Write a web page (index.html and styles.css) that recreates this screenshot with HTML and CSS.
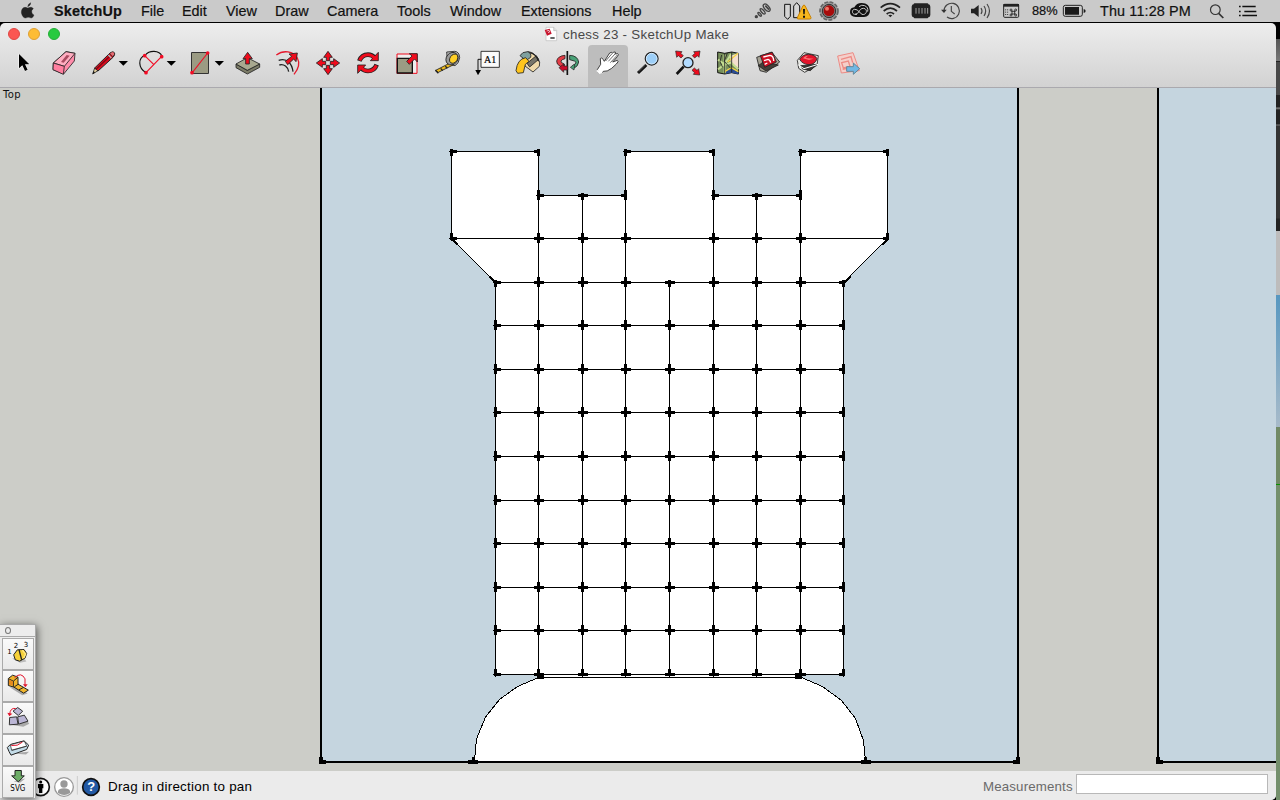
FILE: index.html
```html
<!DOCTYPE html>
<html lang="en">
<head>
<meta charset="utf-8">
<title>chess 23 - SketchUp Make</title>
<link rel="stylesheet" href="styles.css">
</head>
<body>
<header class="menubar">
  <svg class="apple" viewBox="57 0 54 66"><path d="M83 20q1-9 9-12q1 8-9 12M83 24c4 0 7-3 11-2q4 1 6 4q-6 4-5 10q1 7 7 9q-3 9-8 9c-4 0-6-2-9-2s-5 2-9 2c-6 0-12-10-12-18c0-9 6-14 11-14c4 0 6 2 8 2z" fill="#222" stroke="#222"/></svg>
  <nav class="menus">
    <b class="m1">SketchUp</b><span class="m2">File</span><span class="m3">Edit</span><span class="m4">View</span><span class="m5">Draw</span><span class="m6">Camera</span><span class="m7">Tools</span><span class="m8">Window</span><span class="m9">Extensions</span><span class="m10">Help</span>
  </nav>
  <div class="tray">
    <svg width="28" height="22" viewBox="36 0 84 66" fill="none" stroke="#444" stroke-width="4"><circle cx="49" cy="50" r="3" fill="#444"/><ellipse cx="59" cy="43" rx="3" ry="7" transform="rotate(-42 59 43)"/><ellipse cx="68" cy="34" rx="4" ry="10" transform="rotate(-42 68 34)"/><ellipse cx="80" cy="23" rx="7" ry="13" transform="rotate(-42 80 23)"/><path d="M76 17l11 12" stroke-width="5"/></svg>
    <svg width="37" height="22" viewBox="120 0 111 66"><path d="M134 13h17v36l-8 9l-9-9zM161 53V18l9-10l9 10v35z" fill="#d4d4d4" stroke="#111" stroke-width="3"/><path d="M189 17q3-4 6 0l18 36q1 4-4 4h-34q-5 0-3-4z" fill="#f7b71d" stroke="#c98000" stroke-width="3"/><path d="M189 27h6l-1 16h-4zM189 47h6v6h-6z" fill="#111"/></svg>
    <svg width="30" height="22" viewBox="231 0 90 66"><circle cx="267" cy="33" r="27" fill="#999" stroke="#666" stroke-width="5" stroke-dasharray="12 4"/><circle cx="267" cy="33" r="20" fill="#777" stroke="#333" stroke-width="3"/><circle cx="267" cy="32" r="16" fill="#a80b0b"/><circle cx="261" cy="26" r="6" fill="#ef7565"/></svg>
    <svg width="31" height="22" viewBox="321 0 93 66"><path d="M330 36q0-13 13-14q6-13 22-13q24 1 25 23q-1 18-18 19h-25q-17-1-17-15" fill="#111"/><path d="M351 43h-7c-9-1-9-15 0-15q8 0 13 7l9 8c15 4 18-17 5-18c-8-1-12 6-15 11q-4 7-11 7M357 20q8-7 17-3q12 5 9 18" fill="none" stroke="#ccc" stroke-width="3"/></svg>
    <svg width="30" height="22" viewBox="414 0 90 66" fill="none" stroke="#222" stroke-width="5"><path d="M422 23q29-24 58 0M431 33q20-17 40 0M440 42q11-9 22 0"/><path d="M451 52l-6-6q6-4 12 0z" fill="#222" stroke="none"/></svg>
    <svg width="32" height="22" viewBox="504 0 96 66"><rect x="515" y="13" width="56" height="39" rx="7" fill="#222"/><rect x="521" y="10" width="44" height="45" rx="3" fill="#222"/><path d="M528 24v17M537 24v17M546 24v17M555 24v17M563 24v17" stroke="#bbb" stroke-width="2.5"/></svg>
    <svg width="29" height="22" viewBox="600 0 87 66" fill="none" stroke="#444" stroke-width="3.5"><path d="M612 33a23 23 0 1 1 9 18M634 18v16l10 8"/><path d="M603 29h17l-8 10z" fill="#333" stroke="none"/></svg>
    <svg width="32" height="22" viewBox="687 0 96 66"><path d="M693 26h9l14-11v36l-14-11h-9z" fill="#222"/><path d="M723 24q6 9 0 18M732 18q10 15 0 30M741 12q15 21 0 42" fill="none" stroke="#444" stroke-width="3.5"/></svg>
    <svg width="19" height="22" viewBox="783 0 57 66"><rect x="791" y="13" width="45" height="39" rx="3" fill="none" stroke="#222" stroke-width="3"/><path d="M790 12h47v8h-47z" fill="#222"/><path d="M797 28v20M803 28v20" stroke="#333" stroke-width="3" stroke-dasharray="3 4"/><path d="M816 32v12M824 32v12M814 34h12M814 42h12" stroke="#222" stroke-width="2.5"/><g fill="none" stroke="#222" stroke-width="2.5"><circle cx="813" cy="30" r="3"/><circle cx="827" cy="30" r="3"/><circle cx="813" cy="45" r="3"/><circle cx="827" cy="45" r="3"/></g></svg>
  </div>
  <span class="charge">88%</span>
  <svg class="battery" viewBox="186 0 75 66"><rect x="190" y="16" width="57" height="33" rx="6" fill="none" stroke="#222" stroke-width="3"/><path d="M195 21h42v23h-42zM251 27q6 1 6 6t-6 6z" fill="#1a1a1a"/></svg>
  <span class="clock">Thu 11:28 PM</span>
  <svg class="search" viewBox="624 0 54 66" fill="none" stroke="#333" stroke-width="3.6"><circle cx="646" cy="29" r="14.5"/><path d="M656 40l14 14" stroke-width="5"/></svg>
  <svg class="list" viewBox="711 0 63 66"><path d="M717 19.500h5M717 34.500h5M717 46.500h5M727 19.500h40M733 34.500h36M727 46.500h44" stroke="#111" stroke-width="4.500"/></svg>
</header>

<div class="desktop">
<main class="window">
  <div class="titlebar">
    <div class="lights"><i class="red"></i><i class="amber"></i><i class="green"></i></div>
    <svg class="doc" viewBox="669 78 45 48"><path d="M678 82h23l9 9v31h-32z" fill="#fff" stroke="#bbb" stroke-width="2"/><path d="M674 90l15-4l6 15l-14 6z" fill="#c8142d"/><path d="M680 93l7-2l2 5l-5 2" stroke="#fff" fill="none" stroke-width="2"/><path d="M691 114h13" stroke="#333" stroke-width="4"/><path d="M701 82v10h9" fill="#ddd" stroke="#888"/></svg>
    <span class="title">chess 23 - SketchUp Make</span>
  </div>
  <div class="tools">
    <svg viewBox="12 135 120 126"><path d="M57 162v43l10-9l8 17l8-4l-8-16h13z" fill="#000" stroke="#fff" stroke-width="3" paint-order="stroke"/></svg>
    <svg viewBox="132 135 120 126" stroke="#222" stroke-width="2.5"><path d="M160 189l38-34l27 5l-2 23l-32 39l-32-13z" fill="#ff8dab"/><path d="M160 189l38-34l27 5l-32 39z" fill="#ffadc0"/><path d="M160 189l33 10l-3 24l-31-14z" fill="#ff7e9f"/><path d="M183 186l17-21l9 2l-18 21z" fill="#a94c61" stroke="none"/></svg>
    <svg class="wide" viewBox="252 135 144 126"><path d="M278 222l6-18l10 8z" fill="#e8d3a0" stroke="#222" stroke-width="2.5"/><path d="M278 222l3-8l4 3z"/><path d="M284 204l46-45q8-5 14 1q1 6-5 12l-45 41z" fill="#e00b1d" stroke="#222" stroke-width="3"/><path d="M288 208l43-41" stroke="#7b0815" stroke-width="4"/><path d="M329 160l9 10l6-7q-1-11-9-7z" fill="#e86b72" stroke="#222" stroke-width="2"/><path d="M325 165l9 9" stroke="#bbb" stroke-width="4"/><path d="M356 183h28l-14 14z"/></svg>
    <svg class="wide" viewBox="396 135 144 126"><path d="M438 218C414 204 413 174 436 165C447 151 478 149 486 169" fill="none" stroke="#111" stroke-width="3.5"/><path d="M434 167l27 26M438 218l47-49" stroke="#f10b24" stroke-width="3.5"/><g fill="#f10b24"><circle cx="434" cy="167" r="5.500"/><circle cx="485" cy="170" r="5.500"/><circle cx="438" cy="218" r="5.500"/></g><path d="M500 183h28l-14 14z"/></svg>
    <svg class="wide" viewBox="540 135 144 126"><path d="M574.500 157.500h51v63h-51z" fill="#9b9b83" stroke="#333" stroke-width="3"/><path d="M576 219l47-60" stroke="#f10b24" stroke-width="3.5"/><circle cx="576" cy="218" r="5.500" fill="#f10b24"/><circle cx="623" cy="159" r="5.500" fill="#f10b24"/><path d="M644 183h28l-14 14z"/></svg>
    <svg viewBox="684 135 120 126" stroke="#222" stroke-width="2.5"><path d="M708 192l34 19l37-19v10l-37 20l-34-19z" fill="#7c7c68"/><path d="M708 192l34-19l37 19l-37 19z" fill="#a8a88f"/><path d="M737 192v-16h-8l14-19l14 19h-9v16z" fill="#ef0b1c"/></svg>
    <svg viewBox="804 135 120 126" fill="none"><path d="M829 165C850 149 880 153 892 174Q904 196 882 223" stroke="#e51b2f" stroke-width="4"/><path d="M836 181c26-8 40 10 43 34M838 195c14-4 26 6 28 20" stroke="#222" stroke-width="4"/><path d="M856 184l19-15l-8-7l25-3l-4 26l-7-8l-18 17z" fill="#ef0b1c" stroke="#222" stroke-width="2.5"/></svg>
    <svg viewBox="-36 135 120 126"><g fill="#ef0b1c" stroke="#222" stroke-width="2.5"><path id="mv" d="M19 182v-10h-8l13-18l13 18h-8v10z"/><use href="#mv" transform="rotate(90 24 189)"/><use href="#mv" transform="rotate(180 24 189)"/><use href="#mv" transform="rotate(270 24 189)"/></g></svg>
    <svg viewBox="84 135 120 126"><g id="rt"><path d="M118 183q7-19 26-19q12 0 20 9" fill="none" stroke="#222" stroke-width="14"/><path d="M151 182h24v-25z" fill="#ef0b1c" stroke="#222" stroke-width="2.500"/><path d="M119 181q7-17 25-17q11 0 19 9" fill="none" stroke="#ef0b1c" stroke-width="9"/></g><use href="#rt" transform="rotate(180 144 188.500)"/></svg>
    <svg viewBox="204 135 120 126"><path d="M231 162h60v58h-60z" fill="#eee" stroke="#ef0b1c" stroke-width="3"/><path d="M232 175h45v44h-45z" fill="#9b9b83" stroke="#111" stroke-width="4"/><path d="M260 184l16-16l-8-7h24v25l-8-9l-16 16z" fill="#ef0b1c" stroke="#222" stroke-width="2.5"/></svg>
    <svg viewBox="324 135 120 126" stroke="#222" stroke-width="2.5"><path d="M380 156l24-2q14 1 15 19q-2 18-14 24l-22-5z" fill="#bbb"/><path d="M390 189l11 5l-46 23l-8-6z" fill="#edb91b"/><path d="M346 211l9 9M362 205l6 7M376 199l6 6" stroke-width="4"/><ellipse cx="396" cy="176" rx="20" ry="17" fill="#999" transform="rotate(-50 396 176)"/><ellipse cx="401" cy="176" rx="15" ry="11" fill="#ffcf27" transform="rotate(-55 401 176)"/></svg>
    <svg viewBox="444 135 120 126"><path d="M483 154h55v48h-55z" fill="#fafafa" stroke="#111" stroke-width="2.5"/><text x="492" y="190" class="label">A1</text><path d="M484 178h-10v36" fill="none" stroke="#111" stroke-width="3"/><path d="M466 210h17l-9 16z"/></svg>
    <svg viewBox="564 135 120 126" stroke="#222" stroke-width="2.5"><path d="M606 165l19-10q21 2 34 31l-1 13l-19 17l-24-18z" fill="#efd9a9"/><path d="M621 190l28-23l7 11l-27 23z" fill="#77756a"/><path d="M600 167q6-12 23-12q12 4 9 17l-14 10z" fill="#7fa09e"/><path d="M628 158q19 2 28 26" fill="none" stroke-width="4"/><path d="M617 173q-25 4-29 39l5 8l17-2l6-25l11-9z" fill="#ffc51d"/></svg>
    <svg viewBox="684 135 120 126" fill="none"><path d="M742 153v72" stroke="#111" stroke-width="5"/><path d="M749 166q24 1 27 20q-1 13-16 20l-3-8q18-11 6-15l-14-4z" fill="#49a277" stroke="#222" stroke-width="2.500"/><path d="M761 194l-10 8l11 8l2-16z" fill="#49a277" stroke="#222" stroke-width="2"/><path d="M735 166q-22 2-25 17q-1 10 11 16q6 2 12 1v-8q-12-4-10-9q3-5 12-7z" fill="#e43b45" stroke="#222" stroke-width="2.500"/><path d="M717 203l14-11v6h12v12h-12v7z" fill="#c90d2b" stroke="#222" stroke-width="2"/></svg>
    <svg class="active" viewBox="804 135 120 126"><path d="M835 218L832 209L842 193L841 176Q845 170 849 178L853 184L869 159Q876 154 877 160L881 156Q888 153 886 162L893 161Q898 163 892 170L878 186L892 181Q898 184 889 192L875 205Q861 216 850 214L845 220Z" fill="#fff" stroke="#222" stroke-width="2.500"/><path d="M857 183l19-22M865 184l20-22M871 188l21-23" stroke="#222" stroke-width="2"/><path d="M831 211l8 8l8-1" stroke="#fff" stroke-width="5" fill="none"/></svg>
    <svg viewBox="204 75 120 126"><path d="M234 159l25-24" stroke="#111" stroke-width="9"/><path d="M236 155l20-20" stroke="#777" stroke-width="2"/><circle cx="275" cy="116" r="19" fill="#9dcff8" stroke="#222" stroke-width="4"/><circle cx="275" cy="116" r="16" fill="none" stroke="#d4eafc" stroke-width="3"/></svg>
    <svg viewBox="324 75 120 126"><path d="M350 162l21-22" stroke="#111" stroke-width="8"/><circle cx="384" cy="128" r="15" fill="#b2dbff" stroke="#222" stroke-width="4"/><g fill="#ef0b1c" stroke="#222" stroke-width="2"><path id="za" d="M347 93l19 2l-4 5l8 7l-7 7l-8-7l-5 5z"/><use href="#za" transform="matrix(-1 0 0 1 767 0)"/><use href="#za" transform="rotate(180 383 129)"/></g></svg>
    <svg viewBox="444 75 120 126"><path d="M473 96l21 4l21-4l20 4v62l-20-4l-21 4l-21-4z" fill="#78905c" stroke="#111" stroke-width="3"/><path d="M510 108l25-9v46l-22-15z" fill="#f5dfcf"/><path d="M474 148q24-16 39-46M494 104v56M474 119l20 15l19-6l22 20" fill="none" stroke="#c5dd91" stroke-width="6"/><path d="M498 150l16-7l21 13v7l-20-5l-17 3z" fill="#2b4c93"/><path d="M494 155l20-12l21 12M503 126l31-26" fill="none" stroke="#f5d444" stroke-width="4"/><path d="M494 100v62M515 96v62M485 105l-5 20l8 17M502 99l-9 25l19 21" fill="none" stroke="#222" stroke-width="2.5"/></svg>
    <svg viewBox="564 75 120 126" stroke="#222" stroke-width="2.5"><path d="M590 112l45-16l24 30l-40 31l-19-5z" fill="#a5a294"/><path d="M595 137l16-12l44 10l-37 18z" fill="#443f38"/><path d="M601 107l36-10l12 29l-35 16z" fill="#ce1123"/><path d="M610 111l20-5q11 1 11 17M612 122l12-4q6 1 8 10M614 133l8-4" fill="none" stroke="#fff" stroke-width="4"/></svg>
    <svg viewBox="684 75 120 126" stroke="#222" stroke-width="2.5"><path d="M712 121l20-23l43 9l-4 29l-37 21l-18-12z" fill="#e7e7e3"/><path d="M722 137l49-4l-20 19l-23-5z" fill="#393632"/><path d="M714 134l18 12l42-13" fill="none" stroke="#fff" stroke-width="3"/><path d="M719 118q8-15 27-15q19 1 25 13q-5 17-24 18q-20-1-28-16" fill="#e3152b"/><path d="M729 115q5-7 15-8l-7 7l24 2l-14 4z" fill="#fb7777" stroke="none"/></svg>
    <svg viewBox="804 75 120 126"><path d="M833 108l46-10l19 54l-54 7z" fill="#f4cfca" stroke="#ed8b85" stroke-width="3"/><path d="M843 118l30-8l5 18M845 128l20-5l5 16l-20 5zM848 148l29-6" fill="none" stroke="#ed8b85" stroke-width="4"/><path d="M860 140h20v-11l19 17l-19 17v-9h-20z" fill="#71b8e4" stroke="#638698" stroke-width="3"/></svg>
  </div>
  <section class="canvas">
    <svg id="drawing" viewBox="0 88 1276 683" shape-rendering="crispEdges">
      <path d="M321 80H1018V762H321zM1158 80H1300V762H1158z" fill="#c5d5df" stroke="#000" stroke-width="2"/>
      <path d="M451 151H538V195H625V151H713V195H800V151H887V238L843 282V674H495V282L451 238z" fill="#fff"/>
      <path d="M474.500 761L476.500 739L485.500 717L499.500 699.500L517.500 686.500L538.500 677.500H801.500L822.500 686.500L841.500 700.500L855.500 718.500L863.500 740.500L865.500 761z" fill="#fff" stroke="#000"/>
      <path d="M539 674H800V678H539z" fill="#fff"/>
      <path d="M320 762H1019" stroke="#000" stroke-width="2"/>
      <g id="edges" fill="#000"></g>
      <path d="M537 673h7v6h-7zM795 673h7v6h-7zM540 677h260v1h-260zM319 757h4v7h-4zM319 760h7v4h-7zM1016 757h4v7h-4zM1013 760h7v4h-7zM1156 757h4v7h-4zM1156 760h7v4h-7zM468 760h10v4h-10zM472 757h3v4h-3zM861 760h10v4h-10zM864 757h3v4h-3z"/>
    </svg>
    <span class="view-name">Top</span>
  </section>
  <footer class="status">
    <svg class="badges" viewBox="90 468 225 87"><circle cx="122" cy="516" r="26" fill="#fff" stroke="#111" stroke-width="5"/><circle cx="122" cy="501" r="4.500"/><path d="M114 507h16v13h-3v14h-10v-14h-3z"/><circle cx="192" cy="516" r="28" fill="#fff" stroke="#999" stroke-width="4"/><circle cx="192" cy="507" r="11" fill="#999"/><path d="M174 534v-6q3-8 18-8t18 8v6q-17 12-36 0" fill="#999"/><path d="M232 483v56" stroke="#ccc" stroke-width="3"/><circle cx="273" cy="516" r="25" fill="#2259a4" stroke="#111" stroke-width="5"/><text x="262" y="529" class="question">?</text></svg>
    <span class="hint">Drag in direction to pan</span>
    <label for="measure">Measurements</label>
    <input id="measure" type="text">
  </footer>
</main>
<aside class="behind"><i class="s1"></i><i class="s2"></i><i class="s3"></i><i class="s4"></i><i class="s5"></i><i class="s6"></i><i class="s7"></i></aside>
</div>

<aside class="palette">
  <div class="grip"><i></i></div>
  <svg viewBox="9 73 90 87"><path d="M36 130l24 13l19-4l-7-12z" fill="#bbb"/><path d="M41 119l11-15l20-1l8 12l-5 14l-16 9l-13-4z" fill="#f6d23a" stroke="#222" stroke-width="3"/><path d="M57 103l8 31" stroke="#222" stroke-width="4"/><path d="M67 105l10 12l-6 12" fill="none" stroke="#ffe888" stroke-width="4"/><g class="digits"><text x="22" y="117">1</text><text x="41" y="98">2</text><text x="71" y="95">3</text></g></svg>
  <svg viewBox="9 169 90 87"><path d="M29 216l38 24l16-5l-23-18z" fill="#aaa"/><path d="M25 190l13-10l16 6v21l31 18l-14 9l-29-18l-17-5z" fill="#f0b52c" stroke="#222" stroke-width="3"/><path d="M26 191l14 7v17M40 198l14-12M43 215l12-8M57 224l13-7" fill="none" stroke="#222" stroke-width="3"/><path d="M27 193l12 6v12l-12-3z" fill="#e58a1e"/><path d="M44 187q20-18 31 4v18" fill="none" stroke="#e2132c" stroke-width="3"/><path d="M69 207h14l-7 9z" fill="#e2132c"/></svg>
  <svg viewBox="9 265 90 87"><path d="M31 329l39 6l18-9l-6-8z" fill="#aaa"/><path d="M29 307l21-2l4 22l-26 2zM53 305l20-5l11 18l-28 9zM39 288l14-11l15 11l-13 13z" fill="#bbb6d5" stroke="#333" stroke-width="3"/><path d="M47 280q-16-3-18 17" fill="none" stroke="#e2132c" stroke-width="3"/><path d="M22 293l15 3l-9 7z" fill="#e2132c"/></svg>
  <svg viewBox="9 361 90 87"><path d="M29 414l49 4l9-8z" fill="#aaa"/><path d="M22 397l9-9l41-11l14 13l-6 13l-47 17l-6-11z" fill="#c3dbe7" stroke="#222" stroke-width="3"/><path d="M31 389l42-11l7 15l-45 12z" fill="#fff" stroke="#222" stroke-width="2"/><path d="M34 391q19 3 33-10" fill="none" stroke="#e2132c" stroke-width="3"/><path d="M35 406l45-13" stroke="#222" stroke-width="2"/></svg>
  <svg viewBox="9 457 90 87"><path d="M41 498l19 5l16-13z" fill="#aaa"/><path d="M45 466h19v16h9l-18 18l-20-18h10z" fill="#6ead68" stroke="#222" stroke-width="3"/><text x="31" y="529" class="svg-label" textLength="45" lengthAdjust="spacingAndGlyphs">SVG</text></svg>
</aside>
<script src="script.js"></script>
</body>
</html>
```
FILE: styles.css
```css
* { box-sizing: border-box; }
body { margin: 0; width: 1280px; height: 800px; overflow: hidden; background: #000; font-family: "Liberation Sans", Arial, sans-serif; color: #111; }
svg { display: block; }
.menubar { display: flex; height: 22px; background: #cacaca; font-size: 14.4px; line-height: 22px; white-space: nowrap; }
.apple { width: 18px; height: 22px; margin-left: 19px; }
.menus { display: flex; width: 715px; padding-left: 17px; -webkit-text-stroke: 0.2px #111; }
.menus > * { flex: none; }
.m1 { width: 87px; letter-spacing: 0.2px; }
.m2 { width: 41px; }
.m3 { width: 44px; }
.m4 { width: 49px; }
.m5 { width: 52px; }
.m6 { width: 70px; }
.m7 { width: 53px; }
.m8 { width: 71px; }
.m9 { width: 91px; }
.tray { display: flex; }
.charge { width: 30px; margin-left: 12px; font-size: 12.8px; flex: none; -webkit-text-stroke: 0.2px #111; }
.battery { width: 25px; height: 22px; }
.battery, .search, .list { flex: none; }
.clock { flex: none; width: 108px; margin-left: 13px; letter-spacing: 0.13px; -webkit-text-stroke: 0.2px #111; }
.search { width: 18px; height: 22px; }
.list { width: 21px; height: 22px; margin-left: 11px; }
.desktop { display: flex; height: 777px; margin-top: 1px; }
.window { display: flex; flex-direction: column; width: 1276px; flex: none; border-radius: 5px 5px 5px 0; overflow: hidden; background: linear-gradient(#ededed, #d2d2d2 64px); }
.titlebar { display: flex; height: 22px; flex: none; }
.lights { display: flex; gap: 8px; padding: 5px 0 0 8px; width: 543px; }
.lights i { width: 12px; height: 12px; border-radius: 50%; }
.red { background: #fb5652; border: 1px solid #df4744; }
.amber { background: #fdbc34; border: 1px solid #de9f34; }
.green { background: #27ca3f; border: 1px solid #26ad38; }
.doc { width: 15px; height: 16px; margin-top: 3px; }
.title { margin-left: 5px; font-size: 13.3px; line-height: 24px; color: #484848; letter-spacing: 0.3px; white-space: nowrap; }
.tools { display: flex; height: 43px; flex: none; padding-left: 4px; border-bottom: 1px solid #aaa9ae; }
.tools svg { width: 40px; height: 42px; flex: none; }
.tools .wide { width: 48px; }
.tools .active { background: #bdbdbd; border-radius: 4px 4px 0 0; }
.label { font: 30px "Liberation Serif", serif; stroke: #111; stroke-width: 0.6px; }
.canvas { display: flex; height: 683px; flex: none; background: #cccdc8; position: relative; }
#drawing { width: 1276px; height: 683px; }
.view-name { position: absolute; left: 3px; top: 0; font: 10px/13px "DejaVu Sans", sans-serif; letter-spacing: 0.4px; }
.status { display: flex; height: 29px; flex: none; background: #ebebeb; }
.badges { width: 75px; height: 29px; margin-left: 30px; flex: none; }
.question { font: bold 39px "Liberation Sans", sans-serif; fill: #fff; }
.hint { width: 878px; flex: none; padding-left: 3px; font-size: 13.4px; letter-spacing: 0.24px; line-height: 31px; color: #000; }
.status label { width: 93px; flex: none; font-size: 13.3px; letter-spacing: 0.15px; line-height: 31px; color: #6a6a6a; }
.status input { width: 192px; height: 20px; margin: 3px 0 0; border: 1px solid #b8b8b8; background: #fff; padding: 0; }
.behind { display: flex; flex-direction: column; width: 4px; }
.s1 { height: 16px; background: #000; }
.s2 { height: 23px; background: linear-gradient(#555, #777); border-bottom: 1px solid #222; }
.s3 { height: 33px; background: #484848; }
.s4 { height: 136px; background: linear-gradient(#222 0 12px, #888 13px, #222 15px 29px, #777 30px, #333 31px 123px, #222 124px); }
.s5 { height: 64px; background: #bdbcbc; }
.s6 { height: 132px; background: linear-gradient(#5797c0, #a8bbca); }
.s7 { height: 373px; background: linear-gradient(#728a66 0 57px, #089000 57px 58px, #748f6c 58px); }
.palette { position: absolute; left: 0; top: 624px; width: 36px; height: 174px; background: #ededed; border: 1px solid #aaa; border-width: 1px 1px 0 0; box-shadow: 1px 2px 8px rgba(0,0,0,.6); }
.palette .grip { height: 12px; padding: 2px 0 0 5px; border-bottom: 1px solid #aaa; margin-bottom: 1px; }
.grip i { display: block; width: 6px; height: 7px; border: 1px solid #777; border-radius: 50%; }
.palette > svg { width: 32px; height: 32px; margin: 0 0 0 2px; border: 1px solid #aaa; background: linear-gradient(#fafafa, #e9e9e9); }
.digits text { font: 21px "DejaVu Sans", sans-serif; }
.svg-label { font: 24px "DejaVu Sans", sans-serif; }
```
FILE: script.js
```js
const NS = 'http://www.w3.org/2000/svg';
const edges = document.getElementById('edges');

function box(x, y, width, height) {
  const r = document.createElementNS(NS, 'rect');
  Object.entries({ x, y, width, height }).forEach(([k, v]) => r.setAttribute(k, v));
  edges.append(r);
}

// Each edge is a hairline with heavier strokes at its two endpoints.
function row(y, xs) {
  xs.slice(1).forEach((b, i) => {
    const a = xs[i];
    box(a - 2, y, b - a + 4, 1);
    box(a - 1, y - 1, 7, 3);
    box(b - 4, y - 1, 6, 3);
  });
}

function column(x, ys) {
  ys.slice(1).forEach((b, i) => {
    const a = ys[i];
    box(x, a - 2, 1, b - a + 5);
    box(x - 1, a - 2, 3, 7);
    box(x - 1, b - 5, 3, 7);
  });
}

function diagonal(x, y, dir) {
  for (let i = 0; i < 44; i++) box(x + dir * i, y + i, 1, 1);
  for (let i = 0; i < 6; i++) {
    box(x + dir * i, y + i, 2, 2);
    box(x + dir * (43 - i), y + 43 - i, 2, 2);
  }
}

const xs = [495, 538, 582, 625, 669, 713, 756, 800, 843];
const ys = [282, 325, 369, 412, 456, 500, 543, 587, 630, 674];

[[451, 538], [625, 713], [800, 887]].forEach(p => row(151, p));
row(195, [538, 582, 625]);
row(195, [713, 756, 800]);
row(238, [451, 538, 582, 625, 713, 756, 800, 887]);
ys.forEach(y => row(y, xs));

[451, 887].forEach(x => column(x, [151, 238]));
[495, 669, 843].forEach(x => column(x, ys));
[582, 756].forEach(x => column(x, [195, 238, ...ys]));
[538, 625, 713, 800].forEach(x => column(x, [151, 195, 238, ...ys]));

diagonal(451, 238, 1);
diagonal(887, 238, -1);
```
